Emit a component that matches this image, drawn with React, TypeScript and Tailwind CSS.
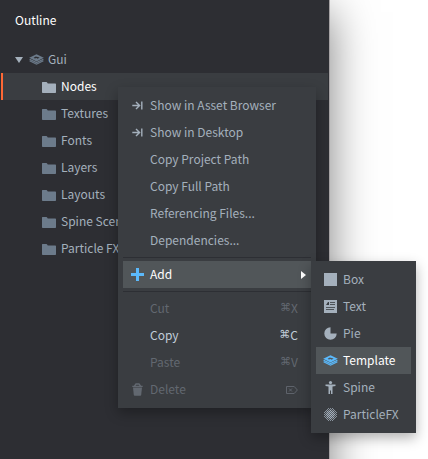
import type { ReactNode } from "react";

const Folder = () => (
  <svg width="14" height="12" viewBox="0 0 14 12" fill="currentColor" aria-hidden="true">
    <path d="M0 1.500Q0 1 .5 1h4q.4 0 .6.400l.7 1.100h7.500q.7 0 .7.700v8.100q0 .7-.7.700H.7q-.7 0-.7-.7z" />
  </svg>
);

const Layers = ({ hole }: { hole: string }) => (
  <svg width="15" height="11" viewBox="0 0 15 11" fill="none" stroke="currentColor" aria-hidden="true">
    <path d="M7.500.2 14.800 3.800 7.500 7.500.2 3.800z" fill="currentColor" stroke="none" />
    <path d="M6.800 2.400 10.600 3.500 8.700 4.700 7.500 3.900 5.900 4.500 4.600 3.700z" className={hole} stroke="none" />
    <path d="M.6 5.300 7.500 8.600l6.900-3.300M.6 6.800l6.900 3.400 6.900-3.400" strokeWidth="1.150" />
  </svg>
);

const Reveal = () => (
  <svg width="11" height="9" viewBox="0 0 11 9" fill="none" stroke="currentColor" strokeWidth="1.400" aria-hidden="true">
    <path d="M.3 4.500H7.400M4 .9 7.600 4.500 4 8.100M9.800.5v8" />
  </svg>
);

const Plus = () => (
  <svg width="13" height="13" viewBox="0 0 13 13" fill="currentColor" aria-hidden="true">
    <path d="M5 0h3v5h5v3H8v5H5V8H0V5h5z" />
  </svg>
);

const Trash = () => (
  <svg width="11" height="13" viewBox="0 0 11 13" aria-hidden="true">
    <path d="M1 4.500h9L9.200 12q-.1.800-.9.800H2.700q-.8 0-.9-.8z" fill="currentColor" />
    <path d="M.3 3.300h10.400M2.500 3 4 1h3l1.500 2" fill="none" stroke="currentColor" strokeWidth="1.300" />
  </svg>
);

const Box = () => (
  <svg width="13" height="13" viewBox="0 0 13 13" aria-hidden="true">
    <path d="M0 0h13v13H0z" fill="currentColor" />
  </svg>
);

const TextIcon = () => (
  <svg width="13" height="13" viewBox="0 0 13 13" aria-hidden="true">
    <path d="M0 0h13v13H0z" fill="currentColor" />
    <path d="M2 5 4 2h1v3z" fill="#3a3d41" />
    <path d="M6 2.500h5M6 4.500h5M2 7.500h9M2 9.500h8" fill="none" stroke="#3a3d41" strokeWidth=".8" />
  </svg>
);

const Pie = () => (
  <svg width="13" height="13" viewBox="0 0 13 13" fill="currentColor" aria-hidden="true">
    <path d="M6.500.3A6.200 6.200 0 1 0 12.700 6.500H6.500z" />
  </svg>
);

const Figure = () => (
  <svg width="11" height="13" viewBox="0 0 11 13" fill="currentColor" aria-hidden="true">
    <circle cx="5.500" cy="1.600" r="1.600" />
    <path d="M.5 3.600h10v1.400L7.500 5.600V13H6V9.500H5V13H3.500V5.600L.5 5z" />
  </svg>
);

const steps = [-6, -5, -4, -3, -2, -1, 0, 1, 2, 3, 4, 5, 6];
const dots = steps
  .flatMap((y) => steps.map((x) => ({ x, y })))
  .filter((d) => (d.x + d.y) % 2 === 0 && d.x * d.x + d.y * d.y < 41);

const Particles = () => (
  <svg width="13" height="13" viewBox="-6.5 -6.5 13 13" fill="currentColor" aria-hidden="true">
    {dots.map((d) => (
      <circle
        key={`${d.x},${d.y}`}
        cx={d.x}
        cy={d.y}
        r={d.x * d.x + d.y * d.y < 20 ? 0.65 : 0.5}
      />
    ))}
  </svg>
);

const EraseKey = () => (
  <svg width="12" height="8" viewBox="0 0 12 8" fill="none" stroke="currentColor" strokeWidth=".9" aria-label="Forward delete">
    <path d="M.5.5h7.700L11.400 4 8.200 7.500H.5zM3 2.500l3 3M6 2.500l-3 3" />
  </svg>
);

const folders = ["Nodes", "Textures", "Fonts", "Layers", "Layouts", "Spine Scenes", "Particle FX"];

type ItemProps = {
  label: string;
  icon?: ReactNode;
  shortcut?: string;
  end?: ReactNode;
  tone?: "normal" | "bright" | "active" | "disabled";
};

const tones = {
  normal: "text-[#a4b0bc]",
  bright: "text-[#c0ccd8]",
  active: "bg-[#515659] text-white",
  disabled: "text-[#626870]",
};

const iconTones = {
  normal: "text-[#a4b0bc]",
  bright: "text-[#c0ccd8]",
  active: "text-[#5bb9fb]",
  disabled: "text-[#626870]",
};

function Item({ label, icon, shortcut, end, tone = "normal" }: ItemProps) {
  return (
    <button
      type="button"
      role="menuitem"
      disabled={tone === "disabled"}
      className={`flex h-[27px] w-full items-center whitespace-nowrap text-left ${tones[tone]}`}
    >
      <span className={`-mr-0.5 flex w-[29px] shrink-0 justify-center ${iconTones[tone]}`}>{icon}</span>
      <span className="grow pb-px">{label}</span>
      {shortcut && (
        <span className="flex items-center pr-[13px] pb-px">
          <span className="font-['DejaVu_Sans',sans-serif] text-[11px]">{shortcut[0]}</span>
          {shortcut.slice(1)}
        </span>
      )}
      {end}
    </button>
  );
}

const Separator = () => <hr className="my-[3px] border-t border-[#2d2f34]" />;

export default function App() {
  return (
    <div className="relative flex h-screen overflow-hidden bg-white pr-[98px] font-['Noto_Sans_CJK_SC','Noto_Sans',sans-serif] text-[12px] leading-5">
      <aside className="-mb-16 grow border-r border-[#a5a2a4] bg-[#2d2e33] shadow-[0_12px_42px_rgba(0,0,0,0.5)]">
        <h1 className="px-[15px] pt-[10px] pb-4 text-white">Outline</h1>
        <button type="button" className="flex h-[27px] w-full items-center px-[15px] text-[#a4b0bc]">
          <svg width="8" height="6" viewBox="0 0 8 6" fill="currentColor" aria-hidden="true">
            <path d="M0 0h8L4 6z" />
          </svg>
          <span className="mr-1 ml-[6px] text-[#6c7b8b]"><Layers hole="fill-[#2d2e33]" /></span>
          <span className="pb-px">Gui</span>
        </button>
        <ul className="mx-px">
          {folders.map((name) => (
            <li key={name}>
              <button
                type="button"
                className={`flex h-[27px] w-full items-center gap-[5px] border-l-2 pl-[39px] ${
                  name === "Nodes"
                    ? "border-[#fd6835] bg-[#3a3d41] text-white"
                    : "border-transparent text-[#a4b0bc]"
                }`}
              >
                <span className={name === "Nodes" ? "text-[#a4b0bc]" : "text-[#6c7b8b]"}><Folder /></span>
                <span className="pb-px">{name}</span>
              </button>
            </li>
          ))}
        </ul>
      </aside>

      <div role="menu" className="absolute top-[87px] left-[118px] w-[198px] bg-[#3a3d41] p-[5px] shadow-[0_5px_12px_rgba(0,0,0,0.3)]">
        <Item label="Show in Asset Browser" icon={<Reveal />} />
        <Item label="Show in Desktop" icon={<Reveal />} />
        <Item label="Copy Project Path" />
        <Item label="Copy Full Path" />
        <Item label="Referencing Files..." />
        <Item label="Dependencies..." />
        <Separator />
        <div className="relative">
          <Item
            label="Add"
            icon={<Plus />}
            tone="active"
            end={
              <svg className="mr-[5px]" width="5" height="8" viewBox="0 0 5 8" fill="currentColor" aria-hidden="true">
                <path d="M0 0 5 4 0 8z" />
              </svg>
            }
          />
          <div role="menu" className="absolute top-0 left-full w-[105px] bg-[#3a3d41] p-[5px] shadow-[0_5px_12px_rgba(0,0,0,0.3)]">
            <Item label="Box" icon={<Box />} />
            <Item label="Text" icon={<TextIcon />} />
            <Item label="Pie" icon={<Pie />} />
            <Item label="Template" icon={<Layers hole="fill-[#515659]" />} tone="active" />
            <Item label="Spine" icon={<Figure />} />
            <Item label="ParticleFX" icon={<Particles />} />
          </div>
        </div>
        <Separator />
        <Item label="Cut" shortcut="⌘X" tone="disabled" />
        <Item label="Copy" shortcut="⌘C" tone="bright" />
        <Item label="Paste" shortcut="⌘V" tone="disabled" />
        <Item label="Delete" icon={<Trash />} tone="disabled" end={<span className="pr-[13px]"><EraseKey /></span>} />
      </div>
    </div>
  );
}
